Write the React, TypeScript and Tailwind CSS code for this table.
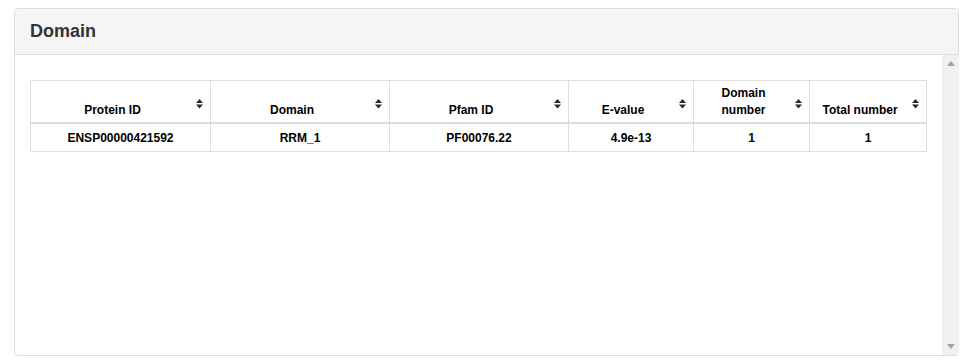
import { ReactNode } from 'react';

type Col = { label: ReactNode; width: string };

const columns: Col[] = [
  { label: 'Protein ID', width: 'w-[180px]' },
  { label: 'Domain', width: 'w-[179px]' },
  { label: 'Pfam ID', width: 'w-[179px]' },
  { label: 'E-value', width: 'w-[125px]' },
  { label: <>Domain<br />number</>, width: 'w-[116px]' },
  { label: 'Total number', width: 'w-[117px]' },
];

const rows = [['ENSP00000421592', 'RRM_1', 'PF00076.22', '4.9e-13', '1', '1']];

// up/down sort caret like fa-sort
const SortIcon = () => (
  <svg width="7" height="10" viewBox="0 0 7 10" className="absolute right-[7px] top-[18px]">
    <path d="M0 4 L3.5 0 L7 4 Z" fill="#2b2b2b" />
    <path d="M0 5.5 L3.5 9.5 L7 5.5 Z" fill="#2b2b2b" />
  </svg>
);

const ScrollBar = () => (
  <div className="flex w-[17px] shrink-0 flex-col items-center justify-between bg-[#f1f1f1] py-[6px]">
    <svg width="8" height="5" viewBox="0 0 8 5">
      <path d="M0 5 L4 0 L8 5 Z" fill="#a3a3a3" />
    </svg>
    <svg width="8" height="5" viewBox="0 0 8 5">
      <path d="M0 0 L4 5 L8 0 Z" fill="#a3a3a3" />
    </svg>
  </div>
);

export default function App() {
  return (
    <div className="h-[362px] w-[968px] bg-white pl-[14px] pt-[8px] font-['Liberation_Sans',Arial,sans-serif] text-[#333]">
      <div className="flex h-[348px] w-[945px] flex-col rounded-[4px] border border-[#ddd] bg-white">
        <div className="flex h-[46px] items-center rounded-t-[3px] border-b border-[#ddd] bg-[#f5f5f5] px-[15px]">
          <h3 className="text-[18px] font-bold">Domain</h3>
        </div>
        <div className="flex min-h-0 flex-1">
          <div className="flex-1 px-[15px] pt-[25px]">
            <table className="w-[896px] table-fixed border-collapse text-[12px] font-bold leading-[17px] text-black">
              <thead>
                <tr>
                  {columns.map((c, i) => (
                    <th
                      key={i}
                      className={`${c.width} relative border border-b-2 border-[#ddd] pb-[3px] pl-[8px] pr-[24px] pt-[4px] text-center align-bottom`}
                    >
                      {c.label}
                      <SortIcon />
                    </th>
                  ))}
                </tr>
              </thead>
              <tbody>
                {rows.map((r, i) => (
                  <tr key={i}>
                    {r.map((v, j) => (
                      <td key={j} className="border border-[#ddd] px-[8px] pb-[4px] pt-[6px] text-center">
                        {v}
                      </td>
                    ))}
                  </tr>
                ))}
              </tbody>
            </table>
          </div>
          <ScrollBar />
        </div>
      </div>
    </div>
  );
}
